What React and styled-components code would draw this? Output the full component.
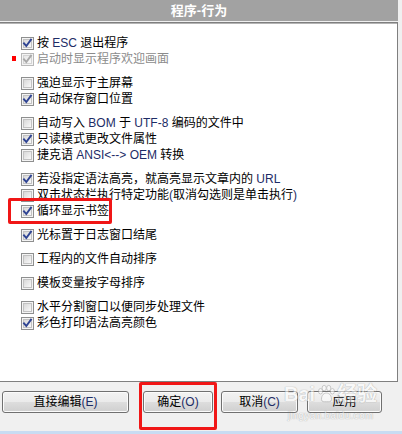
import styled, { createGlobalStyle } from 'styled-components';

const GlobalStyle = createGlobalStyle`
  html, body {
    margin: 0;
    padding: 0;
    background: #f0f0f0;
  }
  body {
    font-family: "Liberation Sans", "Noto Sans CJK SC", sans-serif;
  }
`;

const Window = styled.div`
  width: 402px;
  height: 434px;
  display: flex;
  flex-direction: column;
  background: #f0f0f0;
  overflow: hidden;
  position: relative;
`;

const Header = styled.div`
  height: 21px;
  margin-right: 4px;
  background: #a2a2a2;
  color: #ffffff;
  font-weight: bold;
  font-size: 13px;
  line-height: 22px;
  text-align: center;
  flex-shrink: 0;
`;

const Panel = styled.div`
  margin: 1px 4px 0 -1px;
  height: 360px;
  border: 1px solid #7f7f7f;
  box-shadow: inset 0 1px 0 #b4b4b4;
  background: #ffffff;
  padding: 12px 0 0 21px;
  box-sizing: border-box;
  display: flex;
  flex-direction: column;
  gap: 8px;
  flex-shrink: 0;
`;

const Group = styled.div`
  display: flex;
  flex-direction: column;
`;

const Row = styled.label`
  position: relative;
  display: flex;
  align-items: center;
  gap: 3px;
  height: 16px;
  font-size: 12px;
  line-height: 16px;
  color: ${(p) => (p.$disabled ? '#8b8b8b' : '#000000')};
  white-space: nowrap;
  align-self: flex-start;

  ${(p) =>
    p.$highlight &&
    `
    &::after {
      content: '';
      position: absolute;
      left: -13px;
      right: -3px;
      top: -5px;
      bottom: -5px;
      border: 3px solid #f01616;
      border-radius: 2px;
    }
  `}
`;

const Marker = styled.span`
  position: absolute;
  left: -9px;
  top: 5px;
  width: 4px;
  height: 5px;
  background: #ff0000;
`;

const Lat = styled.span`
  color: ${(p) => (p.$disabled ? '#8b8b8b' : '#1d2c66')};
`;

const ButtonBar = styled.div`
  position: relative;
  display: flex;
  align-items: flex-start;
  padding: 9px 0 0 2px;
  flex: 1;
`;

const Button = styled.div`
  position: relative;
  width: ${(p) => p.$w}px;
  margin-left: ${(p) => p.$ml || 0}px;
  height: 22px;
  box-sizing: border-box;
  border: 1px solid #707070;
  border-radius: 3px;
  background: linear-gradient(#f2f2f2 0%, #ebebeb 48%, #dddddd 52%, #cfcfcf 100%);
  box-shadow: inset 0 0 0 1px #fbfbfb;
  font-size: 12px;
  line-height: 20px;
  text-align: center;
  color: #000;

  ${(p) =>
    p.$highlight &&
    `
    &::after {
      content: '';
      position: absolute;
      left: -5px;
      right: -5px;
      top: -10px;
      bottom: -18px;
      border: 3px solid #f01616;
      border-radius: 2px;
    }
  `}
`;

const BottomStrip = styled.div`
  height: 3px;
  background: #c8dcf2;
  flex-shrink: 0;
`;

const Watermark = styled.div`
  position: absolute;
  left: 284px;
  top: 382px;
  display: flex;
  flex-direction: column;
  align-items: center;
  pointer-events: none;
  opacity: 0.55;
  color: #ffffff;
  text-shadow: 0 0 1px #8a8a8a, 0 0 1px #8a8a8a;
`;

const WmTop = styled.div`
  display: flex;
  align-items: center;
  gap: 1px;
  font-size: 20px;
  font-weight: bold;
  line-height: 24px;
`;

const WmSub = styled.div`
  font-size: 10px;
  line-height: 12px;
  letter-spacing: 0.3px;
  margin-top: 4px;
`;

function Box({ checked, disabled }) {
  const edge = disabled ? '#b9b9b9' : '#8e8f8f';
  const tick = disabled ? '#a9a9a9' : '#2f4493';
  const id = disabled ? 'cbd' : 'cbn';
  return (
    <svg width="13" height="13" viewBox="0 0 13 13" style={{ flexShrink: 0 }}>
      <defs>
        <linearGradient id={id} x1="0" y1="0" x2="1" y2="1">
          <stop offset="0" stopColor={disabled ? '#e6e6e6' : '#d6d6d6'} />
          <stop offset="1" stopColor="#fbfbfb" />
        </linearGradient>
      </defs>
      <rect x="0.5" y="0.5" width="12" height="12" fill="#f4f4f4" stroke={edge} />
      <rect x="2.5" y="2.5" width="8" height="8" fill={`url(#${id})`} stroke={disabled ? '#d4d4d4' : '#c2c2c2'} />
      {checked && (
        <path d="M3 6.4 L5.3 9 L10 2.6" fill="none" stroke={tick} strokeWidth="1.9" strokeLinecap="square" />
      )}
    </svg>
  );
}

function Option({ checked, disabled, marker, highlight, children }) {
  return (
    <Row $disabled={disabled} $highlight={highlight}>
      {marker && <Marker />}
      <Box checked={checked} disabled={disabled} />
      <span>{children}</span>
    </Row>
  );
}

function Paw() {
  return (
    <svg width="20" height="20" viewBox="0 0 22 20">
      <g fill="#ffffff" stroke="#8a8a8a" strokeWidth="0.8">
        <ellipse cx="5" cy="7" rx="2.3" ry="3" />
        <ellipse cx="9" cy="3.5" rx="2.3" ry="3" />
        <ellipse cx="14" cy="3.5" rx="2.3" ry="3" />
        <ellipse cx="18" cy="7" rx="2.3" ry="3" />
        <path d="M6 16 C6 11 9 9 11.5 9 C14 9 17 11 17 16 C17 19 14 18.5 11.5 18.5 C9 18.5 6 19 6 16 Z" />
      </g>
    </svg>
  );
}

export default function App() {
  return (
    <>
      <GlobalStyle />
      <Window>
        <Header>程序-行为</Header>
        <Panel>
          <Group>
            <Option checked>按 <Lat>ESC</Lat> 退出程序</Option>
            <Option checked disabled marker>启动时显示程序欢迎画面</Option>
          </Group>
          <Group>
            <Option>强迫显示于主屏幕</Option>
            <Option checked>自动保存窗口位置</Option>
          </Group>
          <Group>
            <Option>自动写入 <Lat>BOM</Lat> 于 <Lat>UTF-8</Lat> 编码的文件中</Option>
            <Option checked>只读模式更改文件属性</Option>
            <Option>捷克语 <Lat>ANSI&lt;--&gt; OEM</Lat> 转换</Option>
          </Group>
          <Group>
            <Option checked>若没指定语法高亮，就高亮显示文章内的 <Lat>URL</Lat></Option>
            <Option>双击状态栏执行特定功能<Lat>(</Lat>取消勾选则是单击执行<Lat>)</Lat></Option>
            <Option checked highlight>循环显示书签</Option>
          </Group>
          <Group>
            <Option checked>光标置于日志窗口结尾</Option>
          </Group>
          <Group>
            <Option>工程内的文件自动排序</Option>
          </Group>
          <Group>
            <Option>模板变量按字母排序</Option>
          </Group>
          <Group>
            <Option>水平分割窗口以便同步处理文件</Option>
            <Option checked>彩色打印语法高亮颜色</Option>
          </Group>
        </Panel>
        <ButtonBar>
          <Button $w={127}>直接编辑<Lat>(E)</Lat></Button>
          <Button $w={70} $ml={14} $highlight>确定<Lat>(O)</Lat></Button>
          <Button $w={77} $ml={8}>取消<Lat>(C)</Lat></Button>
          <Button $w={75} $ml={9}>应用</Button>
        </ButtonBar>
        <BottomStrip />
        <Watermark>
          <WmTop>
            <span>Bai</span>
            <Paw />
            <span>经验</span>
          </WmTop>
          <WmSub>jingyan.baidu.com</WmSub>
        </Watermark>
      </Window>
    </>
  );
}
